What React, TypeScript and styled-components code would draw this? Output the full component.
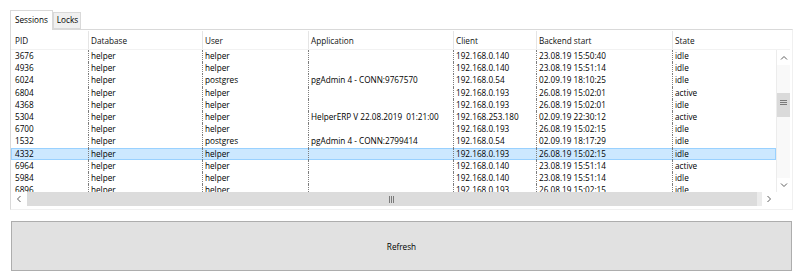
import React from "react";
import styled, { createGlobalStyle } from "styled-components";

const GlobalStyle = createGlobalStyle`
  html, body { margin: 0; padding: 0; background: #ffffff; }
  body { font-family: "Open Sans", "Noto Sans", "Liberation Sans", sans-serif; font-size: 8.2px; color: #000; }
  * { box-sizing: border-box; }
`;

const COLS = "77px 114px 106px 145px 83px 136px 140px";

const Page = styled.div`
  width: 800px;
  height: 280px;
  padding: 10px 7px 0 10px;
  display: flex;
  flex-direction: column;
`;

const TabStrip = styled.div`
  display: flex;
  align-items: flex-end;
  height: 20px;
`;

const Tab = styled.div<{ $active?: boolean }>`
  position: relative;
  z-index: ${(p) => (p.$active ? 2 : 1)};
  height: ${(p) => (p.$active ? "20px" : "17px")};
  margin-bottom: ${(p) => (p.$active ? "0" : "1px")};
  padding: 0 ${(p) => (p.$active ? "4px 0 4px" : "2px 0 3px")};
  display: flex;
  align-items: center;
  background: ${(p) => (p.$active ? "#ffffff" : "#f0f0f0")};
  border: 1px solid #d9d9d9;
  border-bottom: ${(p) => (p.$active ? "none" : "1px solid #d9d9d9")};
  color: #000;
  white-space: nowrap;
  line-height: 1;
`;

const TabPanel = styled.div`
  width: 783px;
  height: 181px;
  margin-top: -1px;
  border: 1px solid #d9d9d9;
  border-right-color: #f0f0f0;
  border-bottom-color: #f0f0f0;
  padding-top: 1px;
  background: #ffffff;
`;

const ListView = styled.div`
  width: 779px;
  height: 175px;
  display: grid;
  grid-template-columns: 765px 14px;
  grid-template-rows: 19px 142px 14px;
  overflow: hidden;
`;

const Header = styled.div`
  grid-column: 1 / -1;
  display: grid;
  grid-template-columns: ${COLS};
  overflow: hidden;
  background: #ffffff;
  border-bottom: 1px solid #f2f2f2;
`;

const HeaderCell = styled.div<{ $first?: boolean }>`
  display: flex;
  align-items: center;
  padding-left: ${(p) => (p.$first ? "4px" : "2px")};
  border-left: ${(p) => (p.$first ? "none" : "1px solid #e5e5e5")};
  white-space: nowrap;
  color: #111;
`;

const Body = styled.div`
  overflow: hidden;
  background: #ffffff;
`;

const Row = styled.div<{ $selected?: boolean }>`
  display: grid;
  grid-template-columns: ${COLS};
  height: 12.2px;
  line-height: 12.2px;
  background: ${(p) => (p.$selected ? "#cce8ff" : "transparent")};
  box-shadow: ${(p) => (p.$selected ? "inset 0 0 0 1px #99d1ff" : "none")};
`;

const Cell = styled.div<{ $first?: boolean }>`
  padding-left: ${(p) => (p.$first ? "4px" : "2px")};
  border-left: ${(p) => (p.$first ? "none" : "1px dotted #7d7d7d")};
  white-space: pre;
  overflow: hidden;
  color: #000;
`;

const VScroll = styled.div`
  display: flex;
  flex-direction: column;
  background: #f9f9f9;
  border-left: 1px solid #ececec;
`;

const ArrowBtn = styled.div<{ $h: number; $w?: number }>`
  flex: 0 0 auto;
  height: ${(p) => p.$h}px;
  width: ${(p) => (p.$w ? `${p.$w}px` : "auto")};
  display: flex;
  align-items: center;
  justify-content: center;
  background: #ffffff;
`;

const VTrack = styled.div`
  flex: 1;
  padding-top: 28px;
`;

const VThumb = styled.div`
  height: 24px;
  background: #dadada;
  display: flex;
  align-items: center;
  justify-content: center;
  padding-bottom: 4px;
`;

const HScroll = styled.div`
  display: flex;
  background: #f0f0f0;
`;

const HTrack = styled.div`
  flex: 1;
  display: flex;
  background: #ececec;
`;

const HThumb = styled.div`
  width: 730px;
  background: #dcdcdc;
  display: flex;
  align-items: center;
  justify-content: center;
`;

const Corner = styled.div`
  background: #ffffff;
`;

const RefreshButton = styled.button`
  margin-top: 11px;
  margin-left: 1px;
  width: 781px;
  height: 50px;
  background: #e1e1e1;
  border: 1px solid #adadad;
  font-family: inherit;
  font-size: 8.2px;
  color: #000;
  padding: 0;
`;

const Chevron = ({ dir }: { dir: "up" | "down" | "left" | "right" }) => {
  const pts = {
    up: "1,4.5 4,1.5 7,4.5",
    down: "1,1.5 4,4.5 7,1.5",
    left: "4.5,1 1.5,4 4.5,7",
    right: "1.5,1 4.5,4 1.5,7",
  }[dir];
  const horiz = dir === "up" || dir === "down";
  return (
    <svg width={horiz ? 8 : 6} height={horiz ? 6 : 8} viewBox={horiz ? "0 0 8 6" : "0 0 6 8"}>
      <polyline points={pts} fill="none" stroke="#606060" strokeWidth="1" />
    </svg>
  );
};

const GripH = () => (
  <svg width="7" height="6" viewBox="0 0 7 6">
    <line x1="0" y1="0.5" x2="7" y2="0.5" stroke="#7a7a7a" />
    <line x1="0" y1="2.5" x2="7" y2="2.5" stroke="#7a7a7a" />
    <line x1="0" y1="4.5" x2="7" y2="4.5" stroke="#7a7a7a" />
  </svg>
);

const GripV = () => (
  <svg width="6" height="7" viewBox="0 0 6 7">
    <line x1="0.5" y1="0" x2="0.5" y2="7" stroke="#7a7a7a" />
    <line x1="2.5" y1="0" x2="2.5" y2="7" stroke="#7a7a7a" />
    <line x1="4.5" y1="0" x2="4.5" y2="7" stroke="#7a7a7a" />
  </svg>
);

const headers = ["PID", "Database", "User", "Application", "Client", "Backend start", "State"];

const rows: string[][] = [
  ["3676", "helper", "helper", "", "192.168.0.140", "23.08.19 15:50:40", "idle"],
  ["4936", "helper", "helper", "", "192.168.0.140", "23.08.19 15:51:14", "idle"],
  ["6024", "helper", "postgres", "pgAdmin 4 - CONN:9767570", "192.168.0.54", "02.09.19 18:10:25", "idle"],
  ["6804", "helper", "helper", "", "192.168.0.193", "26.08.19 15:02:01", "active"],
  ["4368", "helper", "helper", "", "192.168.0.193", "26.08.19 15:02:01", "idle"],
  ["5304", "helper", "helper", "HelperERP V 22.08.2019  01:21:00", "192.168.253.180", "02.09.19 22:30:12", "active"],
  ["6700", "helper", "helper", "", "192.168.0.193", "26.08.19 15:02:15", "idle"],
  ["1532", "helper", "postgres", "pgAdmin 4 - CONN:2799414", "192.168.0.54", "02.09.19 18:17:29", "idle"],
  ["4332", "helper", "helper", "", "192.168.0.193", "26.08.19 15:02:15", "idle"],
  ["6964", "helper", "helper", "", "192.168.0.140", "23.08.19 15:51:14", "active"],
  ["5984", "helper", "helper", "", "192.168.0.140", "23.08.19 15:51:14", "idle"],
  ["6896", "helper", "helper", "", "192.168.0.193", "26.08.19 15:02:15", "idle"],
];

const SELECTED = 8;

export default function App() {
  return (
    <>
      <GlobalStyle />
      <Page>
        <TabStrip>
          <Tab $active>Sessions</Tab>
          <Tab>Locks</Tab>
        </TabStrip>
        <TabPanel>
          <ListView>
            <Header>
              {headers.map((h, i) => (
                <HeaderCell key={h} $first={i === 0}>
                  {h}
                </HeaderCell>
              ))}
            </Header>
            <Body>
              {rows.map((r, ri) => (
                <Row key={ri} $selected={ri === SELECTED}>
                  {r.map((c, ci) => (
                    <Cell key={ci} $first={ci === 0}>
                      {c}
                    </Cell>
                  ))}
                </Row>
              ))}
            </Body>
            <VScroll>
              <ArrowBtn $h={15}>
                <Chevron dir="up" />
              </ArrowBtn>
              <VTrack>
                <VThumb>
                  <GripH />
                </VThumb>
              </VTrack>
              <ArrowBtn $h={14}>
                <Chevron dir="down" />
              </ArrowBtn>
            </VScroll>
            <HScroll>
              <ArrowBtn $h={14} $w={16}>
                <Chevron dir="left" />
              </ArrowBtn>
              <HTrack>
                <HThumb>
                  <GripV />
                </HThumb>
              </HTrack>
              <ArrowBtn $h={14} $w={14}>
                <Chevron dir="right" />
              </ArrowBtn>
            </HScroll>
            <Corner />
          </ListView>
        </TabPanel>
        <RefreshButton>Refresh</RefreshButton>
      </Page>
    </>
  );
}
